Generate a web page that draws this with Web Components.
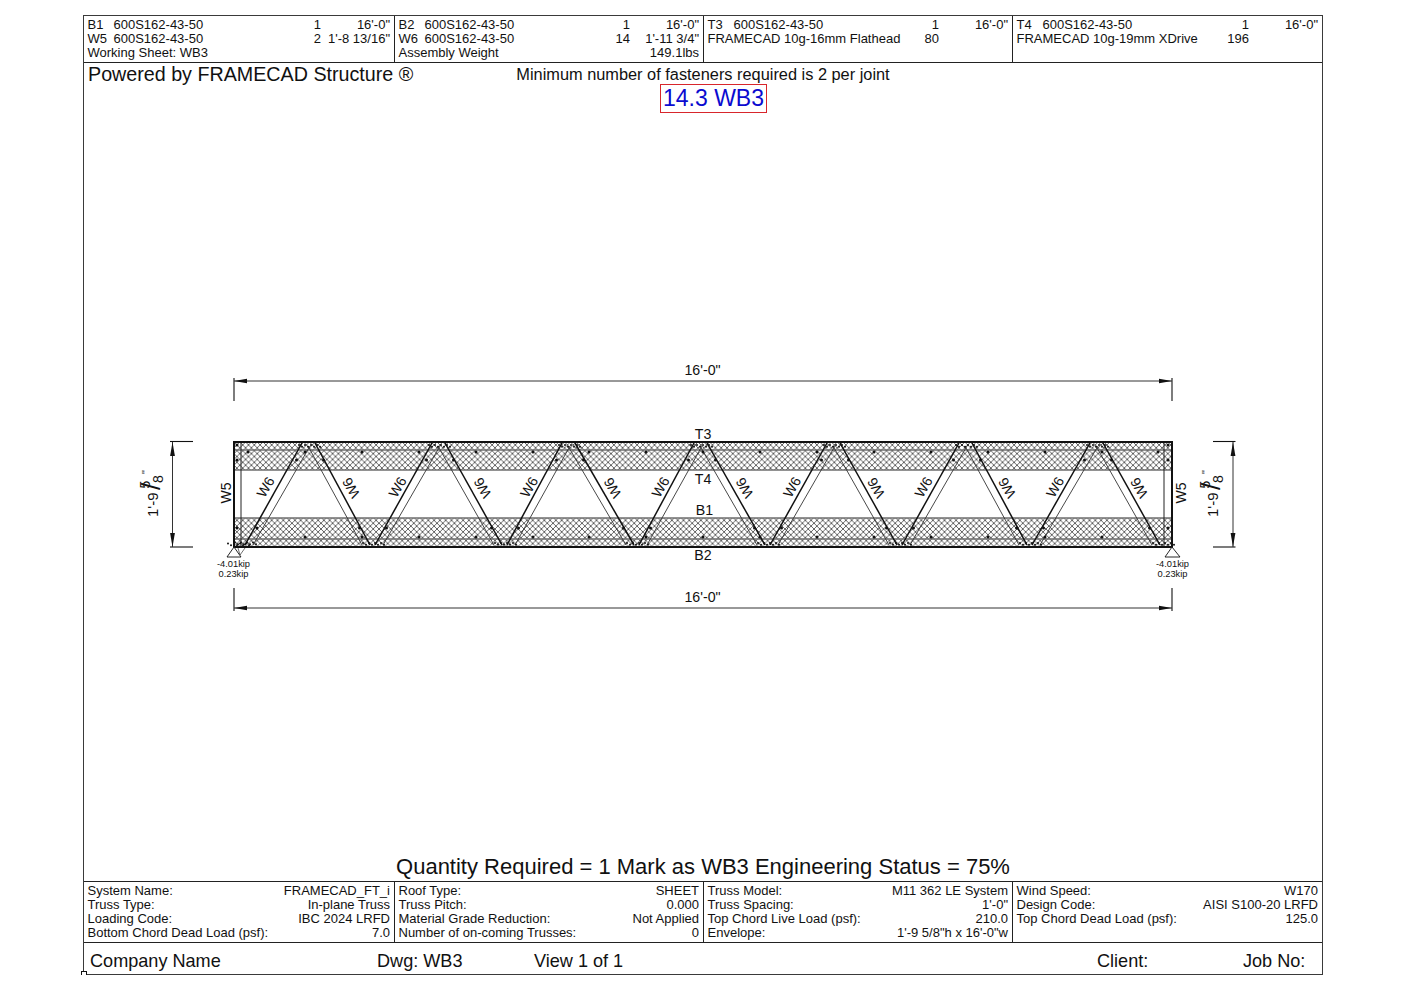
<!DOCTYPE html>
<html lang="en">
<head>
<meta charset="utf-8">
<title>WB3</title>
<style>
html,body{margin:0;padding:0;background:#fff;color:#111;font-family:"Liberation Sans",Arial,sans-serif}
body{padding:15px 0 0 83px}
</style>
</head>
<body>
<cad-sheet>
  <sheet-band slot="head" lines="3">
    <info-cell>
      <bom-row><span slot="tag">B1</span><span slot="part">600S162-43-50</span><span slot="qty">1</span><span slot="len">16'-0"</span></bom-row>
      <bom-row><span slot="tag">W5</span><span slot="part">600S162-43-50</span><span slot="qty">2</span><span slot="len">1'-8 13/16"</span></bom-row>
      <bom-row><span slot="text">Working Sheet: WB3</span></bom-row>
    </info-cell>
    <info-cell>
      <bom-row><span slot="tag">B2</span><span slot="part">600S162-43-50</span><span slot="qty">1</span><span slot="len">16'-0"</span></bom-row>
      <bom-row><span slot="tag">W6</span><span slot="part">600S162-43-50</span><span slot="qty">14</span><span slot="len">1'-11 3/4"</span></bom-row>
      <bom-row><span slot="text">Assembly Weight</span><span slot="len">149.1lbs</span></bom-row>
    </info-cell>
    <info-cell>
      <bom-row><span slot="tag">T3</span><span slot="part">600S162-43-50</span><span slot="qty">1</span><span slot="len">16'-0"</span></bom-row>
      <bom-row><span slot="text">FRAMECAD 10g-16mm Flathead</span><span slot="qty">80</span></bom-row>
    </info-cell>
    <info-cell last>
      <bom-row><span slot="tag">T4</span><span slot="part">600S162-43-50</span><span slot="qty">1</span><span slot="len">16'-0"</span></bom-row>
      <bom-row><span slot="text">FRAMECAD 10g-19mm XDrive</span><span slot="qty">196</span></bom-row>
    </info-cell>
  </sheet-band>

  <drawing-area>
    <span slot="brand">Powered by FRAMECAD Structure ®</span>
    <span slot="note">Minimum number of fasteners required is 2 per joint</span>
    <span slot="mark">14.3 WB3</span>
    <truss-diagram></truss-diagram>
    <span slot="status">Quantity Required = 1 Mark as WB3 Engineering Status = 75%</span>
  </drawing-area>

  <sheet-band slot="foot" lines="4">
    <info-cell>
      <kv-row>System Name:<span slot="v">FRAMECAD_FT_i</span></kv-row>
      <kv-row>Truss Type:<span slot="v">In-plane Truss</span></kv-row>
      <kv-row>Loading Code:<span slot="v">IBC 2024 LRFD</span></kv-row>
      <kv-row>Bottom Chord Dead Load (psf):<span slot="v">7.0</span></kv-row>
    </info-cell>
    <info-cell>
      <kv-row>Roof Type:<span slot="v">SHEET</span></kv-row>
      <kv-row>Truss Pitch:<span slot="v">0.000</span></kv-row>
      <kv-row>Material Grade Reduction:<span slot="v">Not Applied</span></kv-row>
      <kv-row>Number of on-coming Trusses:<span slot="v">0</span></kv-row>
    </info-cell>
    <info-cell>
      <kv-row>Truss Model:<span slot="v">M11 362 LE System</span></kv-row>
      <kv-row>Truss Spacing:<span slot="v">1'-0"</span></kv-row>
      <kv-row>Top Chord Live Load (psf):<span slot="v">210.0</span></kv-row>
      <kv-row>Envelope:<span slot="v">1'-9 5/8"h x 16'-0"w</span></kv-row>
    </info-cell>
    <info-cell last>
      <kv-row>Wind Speed:<span slot="v">W170</span></kv-row>
      <kv-row>Design Code:<span slot="v">AISI S100-20 LRFD</span></kv-row>
      <kv-row>Top Chord Dead Load (psf):<span slot="v">125.0</span></kv-row>
    </info-cell>
  </sheet-band>

  <title-strip slot="title">
    <span slot="company">Company Name</span>
    <span slot="dwg">Dwg: WB3</span>
    <span slot="view">View 1 of 1</span>
    <span slot="client">Client:</span>
    <span slot="job">Job No:</span>
  </title-strip>
</cad-sheet>

<script>
function shadow(el, html){ el.attachShadow({mode:'open'}).innerHTML = html; }

customElements.define('cad-sheet', class extends HTMLElement{
  constructor(){ super(); shadow(this, `<style>
    :host{display:block;position:relative;box-sizing:border-box;width:1240px;height:960px;border:1px solid #3a3a3a}
    .col{display:flex;flex-direction:column;height:100%}
    .mid{flex:1;min-height:0;display:flex}
    .corner{position:absolute;left:-3px;bottom:-3px;width:4px;height:4px;border:1px solid #111;background:#fff}
  </style><div class="col"><slot name="head"></slot><div class="mid"><slot></slot></div><slot name="foot"></slot><slot name="title"></slot></div><div class="corner"></div>`); }
});

customElements.define('sheet-band', class extends HTMLElement{
  constructor(){ super(); shadow(this, `<style>
    :host{display:grid;grid-template-columns:311px 309px 309px 309px;box-sizing:border-box;flex:none;border-bottom:1px solid #222}
    :host([lines="3"]){height:47px}
    :host([lines="4"]){height:62px;border-top:1px solid #222}
  </style><slot></slot>`); }
});

customElements.define('info-cell', class extends HTMLElement{
  constructor(){ super(); shadow(this, `<style>
    :host{display:block;box-sizing:border-box;padding:2px 4px 0 3.5px;border-right:1px solid #222;font:13px/14px "Liberation Sans",Arial,sans-serif;color:#111;min-width:0}
    :host([last]){border-right:0}
  </style><slot></slot>`); }
});

customElements.define('bom-row', class extends HTMLElement{
  constructor(){ super(); shadow(this, `<style>
    :host{display:grid;grid-template-columns:26px 1fr auto 69px;height:14px;white-space:pre}
    .text{grid-column:1/3;grid-row:1}
    .tag{grid-column:1;grid-row:1}
    .part{grid-column:2;grid-row:1}
    .qty{grid-column:3;grid-row:1;text-align:right}
    .len{grid-column:4;grid-row:1;text-align:right}
  </style><div class="text"><slot name="text"></slot></div><div class="tag"><slot name="tag"></slot></div><div class="part"><slot name="part"></slot></div><div class="qty"><slot name="qty"></slot></div><div class="len"><slot name="len"></slot></div>`); }
});

customElements.define('kv-row', class extends HTMLElement{
  constructor(){ super(); shadow(this, `<style>
    :host{display:flex;justify-content:space-between;height:14px;white-space:pre}
  </style><div><slot></slot></div><div><slot name="v"></slot></div>`); }
});

customElements.define('drawing-area', class extends HTMLElement{
  constructor(){ super(); shadow(this, `<style>
    :host{display:flex;flex-direction:column;flex:1;min-width:0;align-items:stretch;font-family:"Liberation Sans",Arial,sans-serif;color:#111}
    .top{display:grid;grid-template-columns:1fr auto 1fr;align-items:center;height:21px;flex:none}
    .brand{font-size:19.7px;line-height:23px;padding-left:4px;white-space:nowrap}
    .note{font-size:16.35px;line-height:23px;white-space:nowrap}
    .markrow{display:flex;justify-content:center;flex:none;padding-left:21px}
    .mark{box-sizing:border-box;height:29px;width:107px;border:1px solid #d8262c;color:#0b0bd0;font-size:23px;line-height:26px;text-align:center;white-space:nowrap}
    .canvas{flex:none;height:740px}
    .status{flex:1;display:flex;justify-content:center;align-items:center;font-size:22px;white-space:nowrap}
  </style>
  <div class="top"><div class="brand"><slot name="brand"></slot></div><div class="note"><slot name="note"></slot></div><div></div></div>
  <div class="markrow"><div class="mark"><slot name="mark"></slot></div></div>
  <div class="canvas"><slot></slot></div>
  <div class="status"><slot name="status"></slot></div>`); }
});

customElements.define('title-strip', class extends HTMLElement{
  constructor(){ super(); shadow(this, `<style>
    :host{display:grid;grid-template-columns:287px 157px 563px 146px 1fr;box-sizing:border-box;flex:none;height:31px;align-items:center;padding-left:6px;padding-top:5px;font:18.1px/22px "Liberation Sans",Arial,sans-serif;color:#111;white-space:nowrap}
  </style><div><slot name="company"></slot></div><div><slot name="dwg"></slot></div><div><slot name="view"></slot></div><div><slot name="client"></slot></div><div><slot name="job"></slot></div>`); }
});

customElements.define('truss-diagram', class extends HTMLElement{
  constructor(){
    super();
    const L=234,R=1172,T=442,B=547;
    const tops=[310,440,570,702,835,967,1098];
    const bots=[243,373,505,637,768,900,1030,1163];
    let s='';
    const line=(x1,y1,x2,y2,w,c)=>`<line x1="${x1}" y1="${y1}" x2="${x2}" y2="${y2}" stroke="${c||'#111'}" stroke-width="${w||1}"/>`;
    const dot=(x,y,r)=>`<circle cx="${x}" cy="${y}" r="${r||1.5}" fill="#111"/>`;
    const poly=(p,f)=>`<polygon points="${p}" fill="${f||'#111'}"/>`;
    const txt=(x,y,t,fs,extra)=>`<text x="${x}" y="${y}" font-size="${fs}" text-anchor="middle" ${extra||''}>${t}</text>`;

    s+=`<rect x="${L}" y="${T}" width="${R-L}" height="28" fill="url(#hatch)"/>`;
    s+=`<rect x="${L}" y="518" width="${R-L}" height="${B-518}" fill="url(#hatch)"/>`;
    [450,470,518,539].forEach(y=>{ s+=line(L,y,R,y,1.6,'#6e6e6e'); });

    for(let i=0;i<7;i++){
      const t=tops[i], b0=bots[i], b1=bots[i+1];
      s+=line(b0+2,545,t-8,443,1.5);
      s+=line(b0+10,545,t,446,.9,'#333');
      s+=line(t+5,443,b1-3,545,1.5);
      s+=line(t-2,446,b1-11,545,.9,'#333');
    }

    s+=line(241,T,241,B,1,'#222')+line(1164,T,1164,B,1,'#222');

    for(let k=0;k<17;k++){
      const x=Math.round(248+56.9*k);
      s+=dot(x,452);
      if(k>0&&k<16) s+=dot(x,537);
    }
    tops.forEach(t=>{ s+=dot(t-13.5,460)+dot(t+13.5,460); });
    bots.slice(1).forEach(b=>{ s+=dot(b-13.5,528); if(b<1160) s+=dot(b+13.5,528); });
    s+=dot(257,528);
    [[237,445],[237,460],[237,528],[1168,445],[1168,460],[1168,528]].forEach(p=>{ s+=dot(p[0],p[1]); });

    const cluster=(x,y)=>{ let o=''; [-10,-7,-4,-1,2,5,8,11].forEach((d,i)=>{ o+=dot(x+d,y+(i%2?1.2:-.6),1); }); return o; };
    tops.forEach(t=>{ s+=cluster(t-1,445.5); });
    bots.slice(1).forEach(b=>{ s+=cluster(b,543.5); });
    s+=cluster(245,543)+cluster(238,544);

    s+=`<rect x="${L}" y="${T}" width="${R-L}" height="${B-T}" fill="none" stroke="#111" stroke-width="2"/>`;

    s+=`<polygon points="${L},547 227,557 241,557" fill="#fff" stroke="#111" stroke-width=".9"/>`;
    s+=`<polyline points="245,548 240,555 238,548" fill="none" stroke="#333" stroke-width=".7"/>`;
    s+=`<polygon points="${R},547 1165,557 1180,557" fill="#fff" stroke="#111" stroke-width=".9"/>`;
    s+=txt(233.5,567,'-4.01kip',9.3)+txt(233.5,577,'0.23kip',9.3);
    s+=txt(1172.5,567,'-4.01kip',9.3)+txt(1172.5,577,'0.23kip',9.3);

    const hdim=(y,e1,e2,ty)=>{
      let o=line(L,e1,L,e2,1.1)+line(R,e1,R,e2,1.1)+line(L,y,R,y,1,'#333');
      o+=poly(`${L},${y} ${L+13},${y-2.2} ${L+13},${y+2.2}`)+poly(`${R},${y} ${R-13},${y-2.2} ${R-13},${y+2.2}`);
      return o+txt(702.5,ty,`16'-0"`,14.2);
    };
    s+=hdim(381,378,401,375)+hdim(608,588,611,602);

    const vdim=(x,e1,e2)=>{
      let o=line(e1,T-.5,e2,T-.5,1.1)+line(e1,B,e2,B,1.1)+line(x,T,x,B,1,'#333');
      o+=poly(`${x},${T} ${x-2.4},${T+14} ${x+2.4},${T+14}`)+poly(`${x},${B} ${x-2.4},${B-14} ${x+2.4},${B-14}`);
      return o;
    };
    s+=vdim(172.5,170,193)+vdim(1233,1213,1235.5);

    const frac=(dx)=>`<g transform="translate(${158+dx} 517) rotate(-90)">
      <text x="0" y="0" font-size="15">1'-9</text>
      <text x="28.5" y="-8" font-size="14">5</text>
      <text x="27" y="2" font-size="26">/</text>
      <text x="34" y="4.5" font-size="14">8</text>
      <text x="43" y="-8" font-size="11">"</text>
    </g>`;
    s+=frac(0)+frac(1060);

    const rot=(x,y,a,t)=>`<text transform="translate(${x} ${y}) rotate(${a})" font-size="14" text-anchor="middle" y="5">${t}</text>`;
    s+=rot(225.5,493,-90,'W5')+rot(1180.5,493,-90,'W5');
    [265.5,397.5,529,660.5,792,923.5,1055].forEach(x=>{ s+=rot(x,487,-60,'W6'); });
    [351,482.5,612.5,744.5,876,1007,1139].forEach(x=>{ s+=rot(x,488,-120,'W6'); });
    s+=txt(703,439,'T3',14.2)+txt(703,484,'T4',14.2)+txt(704.5,515,'B1',14.2)+txt(703,560,'B2',14.2);

    shadow(this, `<style>
      :host{display:block;width:100%;height:100%}
      svg{display:block;width:100%;height:100%}
      text{font-family:"Liberation Sans",Arial,sans-serif;fill:#111}
    </style>
    <svg viewBox="84 113 1238 740" xmlns="http://www.w3.org/2000/svg" role="img" aria-label="Truss elevation WB3">
      <defs>
        <pattern id="hatch" patternUnits="userSpaceOnUse" x="234" y="442" width="5.8" height="5.8">
          <path d="M0 0L5.8 5.8M5.8 0L0 5.8" stroke="#222" stroke-width=".7" fill="none"/>
        </pattern>
      </defs>
      ${s}
    </svg>`);
  }
});
</script>
</body>
</html>
